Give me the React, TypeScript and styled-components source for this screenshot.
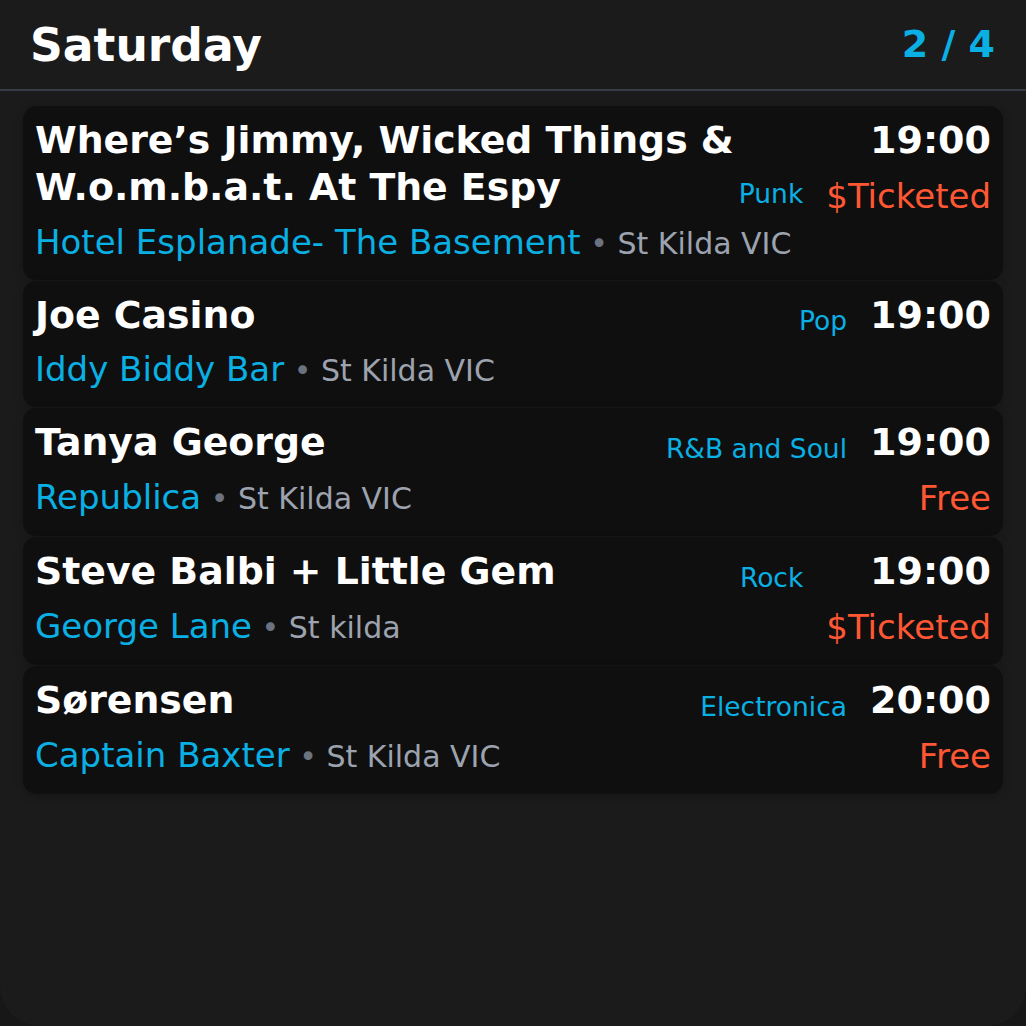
import React from "react";
import styled, { createGlobalStyle } from "styled-components";

const GlobalStyle = createGlobalStyle`
  html, body {
    margin: 0;
    padding: 0;
    background: #171717;
  }
  body {
    font-family: "DejaVu Sans", "Liberation Sans", sans-serif;
  }
  * { box-sizing: border-box; }
`;

const Screen = styled.div`
  width: 1026px;
  height: 1026px;
  background: #1b1b1b;
  border-radius: 0 0 40px 40px;
  overflow: hidden;
  display: flex;
  flex-direction: column;
`;

const Header = styled.header`
  height: 91px;
  flex: none;
  display: flex;
  align-items: center;
  justify-content: space-between;
  padding: 0 31px 2px 30px;
  border-bottom: 2px solid #363b46;
`;

const DayTitle = styled.h1`
  margin: 3px 0 0;
  font-size: 45.6px;
  font-weight: 700;
  color: #ffffff;
`;

const PageCount = styled.span`
  margin-top: 1px;
  font-size: 38px;
  font-weight: 700;
  color: #0aafe3;
`;

const List = styled.div`
  display: flex;
  flex-direction: column;
  gap: 1px;
  padding: 15px 23px 0;
`;

const Card = styled.div`
  display: flex;
  gap: 23px;
  padding: 11px 12px 13px;
  background: #0f0f0f;
  border-radius: 14px;
  box-shadow: 0 2px 10px rgba(0, 0, 0, 0.22);
`;

const Main = styled.div`
  flex: 1;
  min-width: 0;
  display: flex;
  flex-direction: column;
  gap: 6px;
`;

const TitleRow = styled.div`
  display: flex;
  align-items: flex-end;
`;

const EventTitle = styled.div`
  flex: 1;
  min-width: 0;
  font-size: 37.8px;
  font-weight: 700;
  line-height: 46.8px;
  color: #ffffff;
`;

const Genre = styled.span`
  flex: none;
  font-size: 26.5px;
  line-height: 34px;
  color: #0aafe3;
`;

const VenueLine = styled.div`
  font-size: 34px;
  line-height: 50px;
  color: #0aafe3;
  white-space: nowrap;
`;

const Location = styled.span`
  font-size: 30px;
  line-height: 1;
  color: #9ca3af;
`;

const Dot = styled.span`
  color: #6b7280;
`;

const Side = styled.div`
  flex: none;
  display: flex;
  flex-direction: column;
  align-items: flex-end;
  gap: 7px;
`;

const Time = styled.div`
  font-size: 38px;
  font-weight: 700;
  line-height: 46.8px;
  color: #ffffff;
`;

const Price = styled.div`
  font-size: 34px;
  line-height: 50px;
  color: #ff5733;
`;

type Gig = {
  title: string;
  genre: string;
  time: string;
  price?: string;
  venue: string;
  location: string;
};

const gigs: Gig[] = [
  {
    title: "Where’s Jimmy, Wicked Things & W.o.m.b.a.t. At The Espy",
    genre: "Punk",
    time: "19:00",
    price: "$Ticketed",
    venue: "Hotel Esplanade- The Basement",
    location: "St Kilda VIC",
  },
  {
    title: "Joe Casino",
    genre: "Pop",
    time: "19:00",
    venue: "Iddy Biddy Bar",
    location: "St Kilda VIC",
  },
  {
    title: "Tanya George",
    genre: "R&B and Soul",
    time: "19:00",
    price: "Free",
    venue: "Republica",
    location: "St Kilda VIC",
  },
  {
    title: "Steve Balbi + Little Gem",
    genre: "Rock",
    time: "19:00",
    price: "$Ticketed",
    venue: "George Lane",
    location: "St kilda",
  },
  {
    title: "Sørensen",
    genre: "Electronica",
    time: "20:00",
    price: "Free",
    venue: "Captain Baxter",
    location: "St Kilda VIC",
  },
];

export default function App() {
  return (
    <>
      <GlobalStyle />
      <Screen>
        <Header>
          <DayTitle>Saturday</DayTitle>
          <PageCount>2 / 4</PageCount>
        </Header>
        <List>
          {gigs.map((g, i) => (
            <Card key={i}>
              <Main>
                <TitleRow>
                  <EventTitle>{g.title}</EventTitle>
                  <Genre>{g.genre}</Genre>
                </TitleRow>
                <VenueLine>
                  {g.venue}
                  <Location>
                    {" "}
                    <Dot>•</Dot> {g.location}
                  </Location>
                </VenueLine>
              </Main>
              <Side>
                <Time>{g.time}</Time>
                {g.price && <Price>{g.price}</Price>}
              </Side>
            </Card>
          ))}
        </List>
      </Screen>
    </>
  );
}
